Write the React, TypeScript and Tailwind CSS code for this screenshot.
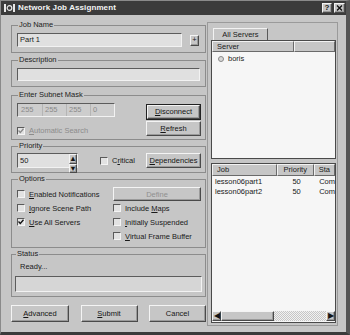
import React from "react";

type Kids = { children?: React.ReactNode; className?: string };

const Btn = ({ children, className = "", disabled = false }: Kids & { disabled?: boolean }) => (
  <div
    className={
      "flex items-center justify-center bg-[#c6c6c6] border border-t-[#f4f4f4] border-l-[#f4f4f4] border-b-[#4a4a4a] border-r-[#4a4a4a] shadow-[inset_-1px_-1px_0_#9a9a9a] text-[7.5px] leading-none " +
      (disabled ? "text-[#909090] " : "text-[#151515] ") +
      className
    }
  >
    {children}
  </div>
);

const Check = ({ checked = false, disabled = false }) => (
  <span className="flex w-[8px] h-[8px] shrink-0 items-center justify-center border border-t-[#5a5a5a] border-l-[#5a5a5a] border-b-[#f4f4f4] border-r-[#f4f4f4] bg-[#e2e2e2]">
    {checked && (
      <svg width="6" height="6" viewBox="0 0 6 6">
        <path d="M0.5 2.5 L2.3 4.5 L5.5 0.8" fill="none" stroke={disabled ? "#8a8a8a" : "#111"} strokeWidth="1.3" />
      </svg>
    )}
  </span>
);

const Opt = ({ label, checked = false, disabled = false }: { label: React.ReactNode; checked?: boolean; disabled?: boolean }) => (
  <div className="flex items-center gap-[4px]">
    <Check checked={checked} disabled={disabled} />
    <span className={disabled ? "text-[#8c8c8c]" : "text-[#1a1a1a]"}>{label}</span>
  </div>
);

const Group = ({ label, className = "", children }: Kids & { label: string }) => (
  <fieldset className={"border border-[#8c8c8c] rounded-none min-w-0 " + className}>
    <legend className="ml-[1px] px-[1px] text-[7.5px] leading-[10px] text-[#222]">{label}</legend>
    {children}
  </fieldset>
);

const Sunken = ({ children, className = "" }: Kids) => (
  <div
    className={
      "border border-t-[#5c5c5c] border-l-[#5c5c5c] border-b-[#f2f2f2] border-r-[#f2f2f2] " + className
    }
  >
    {children}
  </div>
);

const Head = ({ children, className = "" }: Kids) => (
  <div
    className={
      "h-[11px] flex items-center px-[4px] bg-[#c6c6c6] border border-t-[#f2f2f2] border-l-[#f2f2f2] border-b-[#6a6a6a] border-r-[#6a6a6a] text-[7.5px] text-[#1a1a1a] " +
      className
    }
  >
    {children}
  </div>
);

export default function App() {
  return (
    <div className="w-[350px] h-[335px] bg-[#c6c6c6] border-l border-t border-l-[#8a8a8a] border-t-[#8a8a8a] border-r-[4px] border-r-[#555] border-b-[3px] border-b-[#3a3a3a] flex flex-col font-['Liberation_Sans',Arial,sans-serif] text-[7.5px] text-[#1a1a1a] overflow-hidden">
      {/* title bar */}
      <div className="h-[14px] shrink-0 bg-[#3b3b3b] flex items-center pl-[3px] pr-[1px]">
        <svg width="11" height="8" viewBox="0 0 11 8" className="mr-[3px]">
          <rect x="0" y="0" width="2" height="8" fill="#e8e8e8" />
          <rect x="9" y="0" width="2" height="8" fill="#e8e8e8" />
          <circle cx="5.5" cy="4" r="2.3" fill="none" stroke="#e8e8e8" strokeWidth="1.2" />
        </svg>
        <span className="text-[8px] font-bold text-[#f4f4f4] tracking-[0.1px]">Network Job Assignment</span>
        <div className="ml-auto flex gap-[2px]">
          <Btn className="w-[10px] h-[10px] font-bold text-[8px]">?</Btn>
          <Btn className="w-[11px] h-[10px]">
            <svg width="7" height="6" viewBox="0 0 7 6">
              <path d="M1 0.5 L6 5.5 M6 0.5 L1 5.5" stroke="#111" strokeWidth="1.4" />
            </svg>
          </Btn>
        </div>
      </div>

      <div className="flex flex-1 min-h-0">
        {/* left column */}
        <div className="w-[205px] pl-[10px] pt-[5px] flex flex-col">
          <Group label="Job Name" className="px-[5px] pt-[3px] pb-[5px]">
            <div className="flex items-center">
              <Sunken className="w-[165px] h-[14px] bg-[#e0e0e0] flex items-center px-[2px]">Part 1</Sunken>
              <Btn className="ml-[8px] w-[9px] h-[11px]">+</Btn>
            </div>
          </Group>

          <Group label="Description" className="mt-[2px] px-[5px] pt-[3px] pb-[5px]">
            <Sunken className="h-[13px] bg-[#e0e0e0]" />
          </Group>

          <Group label="Enter Subnet Mask" className="mt-[3px] pl-[5px] pr-[4px] pt-[3px] pb-[3px]">
            <div className="flex justify-between">
              <div className="flex flex-col">
                <Sunken className="w-[98px] h-[14px] bg-[#cdcdcd] flex items-center text-[#8a8a8a]">
                  <span className="w-[25px] pl-[3px] border-r border-[#b5b5b5]">255</span>
                  <span className="w-[24px] pl-[2px] border-r border-[#b5b5b5]">255</span>
                  <span className="w-[24px] pl-[2px] border-r border-[#b5b5b5]">255</span>
                  <span className="pl-[2px]">0</span>
                </Sunken>
                <div className="mt-[8px]">
                  <Opt label={<><span className="underline">A</span>utomatic Search</>} checked disabled />
                </div>
              </div>
              <div className="flex flex-col">
                <div className="mt-[1px] border border-[#222]">
                  <Btn className="w-[53px] h-[14px]"><span className="underline">D</span>isconnect</Btn>
                </div>
                <Btn className="mt-[1px] w-[55px] h-[15px]"><span className="underline">R</span>efresh</Btn>
              </div>
            </div>
          </Group>

          <Group label="Priority" className="mt-[1px] pl-[5px] pr-[4px] pt-[2px] pb-[4px]">
            <div className="flex items-center">
              <Sunken className="w-[61px] h-[15px] bg-[#e0e0e0] flex items-center">
                <span className="pl-[2px] flex-1">50</span>
                <div className="flex flex-col w-[8px] h-full">
                  <Btn className="flex-1 text-[5px]">▲</Btn>
                  <Btn className="flex-1 text-[5px]">▼</Btn>
                </div>
              </Sunken>
              <div className="ml-[22px]">
                <Opt label={<>C<span className="underline">r</span>itical</>} />
              </div>
              <Btn className="ml-auto w-[55px] h-[15px]"><span className="underline">D</span>ependencies</Btn>
            </div>
          </Group>

          <Group label="Options" className="mt-[1px] pl-[5px] pr-[4px] pt-[3px] pb-[4px]">
            <div className="grid grid-cols-[96px_1fr] auto-rows-[14px] items-center">
              <Opt label={<><span className="underline">E</span>nabled Notifications</>} />
              <Btn className="h-[14px]" disabled>Define</Btn>
              <Opt label={<><span className="underline">I</span>gnore Scene Path</>} />
              <Opt label={<>Include <span className="underline">M</span>aps</>} />
              <Opt label={<><span className="underline">U</span>se All Servers</>} checked />
              <Opt label={<><span className="underline">I</span>nitially Suspended</>} />
              <div />
              <Opt label={<><span className="underline">V</span>irtual Frame Buffer</>} />
            </div>
          </Group>

          <Group label="Status" className="mt-[1px] px-[3px] pt-[2px] pb-[4px]">
            <div className="h-[10px] flex items-center pl-[5px]">Ready...</div>
            <Sunken className="mt-[5px] h-[16px] bg-[#d6d6d6]" />
          </Group>

          <div className="mt-[8px] flex justify-between">
            <Btn className="w-[58px] h-[17px]"><span className="underline">A</span>dvanced</Btn>
            <Btn className="w-[57px] h-[17px]"><span className="underline">S</span>ubmit</Btn>
            <Btn className="w-[57px] h-[17px]">Cancel</Btn>
          </div>
        </div>

        {/* right column */}
        <div className="ml-[1px] mt-[7px] w-[131px] h-[304px] border border-[#9a9a9a] pl-[3px] pr-[1px] pt-[5px] flex flex-col">
          <div className="ml-[2px] w-[55px] h-[12px] flex items-center justify-center bg-[#c6c6c6] border border-b-0 border-t-[#f2f2f2] border-l-[#f2f2f2] border-r-[#5a5a5a]">
            All Servers
          </div>
          <div className="h-[119px] border border-[#4a4a4a] bg-[#f6f6f6] flex flex-col">
            <div className="flex">
              <Head className="w-[82px]">Server</Head>
              <Head className="flex-1" />
            </div>
            <div className="mt-[2px] h-[10px] flex items-center pl-[6px] gap-[4px]">
              <span className="w-[6px] h-[6px] rounded-full border border-[#8a8a8a] bg-[#d8d8d8]" />
              <span>boris</span>
            </div>
          </div>

          <div className="mt-[4px] h-[160px] border border-[#4a4a4a] bg-[#f6f6f6] flex flex-col">
            <div className="flex">
              <Head className="w-[69px] h-[12px]">Job</Head>
              <Head className="w-[39px] h-[12px] justify-center">Priority</Head>
              <Head className="flex-1 h-[12px]">Sta</Head>
            </div>
            {["lesson06part1", "lesson06part2"].map((j, i) => (
              <div key={j} className={"h-[10px] flex items-center " + (i === 0 ? "mt-[1px]" : "")}>
                <span className="w-[69px] pl-[3px]">{j}</span>
                <span className="w-[39px] text-center">50</span>
                <span className="pl-[4px]">Com</span>
              </div>
            ))}
            <div className="mt-auto mb-[1px] h-[10px] flex">
              <Btn className="w-[9px] h-full text-[5px]">◀</Btn>
              <Btn className="w-[53px] h-full" />
              <div className="flex-1 bg-[repeating-conic-gradient(#c6c6c6_0_25%,#f2f2f2_0_50%)] bg-[length:2px_2px]" />
              <Btn className="w-[9px] h-full text-[5px]">▶</Btn>
            </div>
          </div>
        </div>
      </div>
    </div>
  );
}
